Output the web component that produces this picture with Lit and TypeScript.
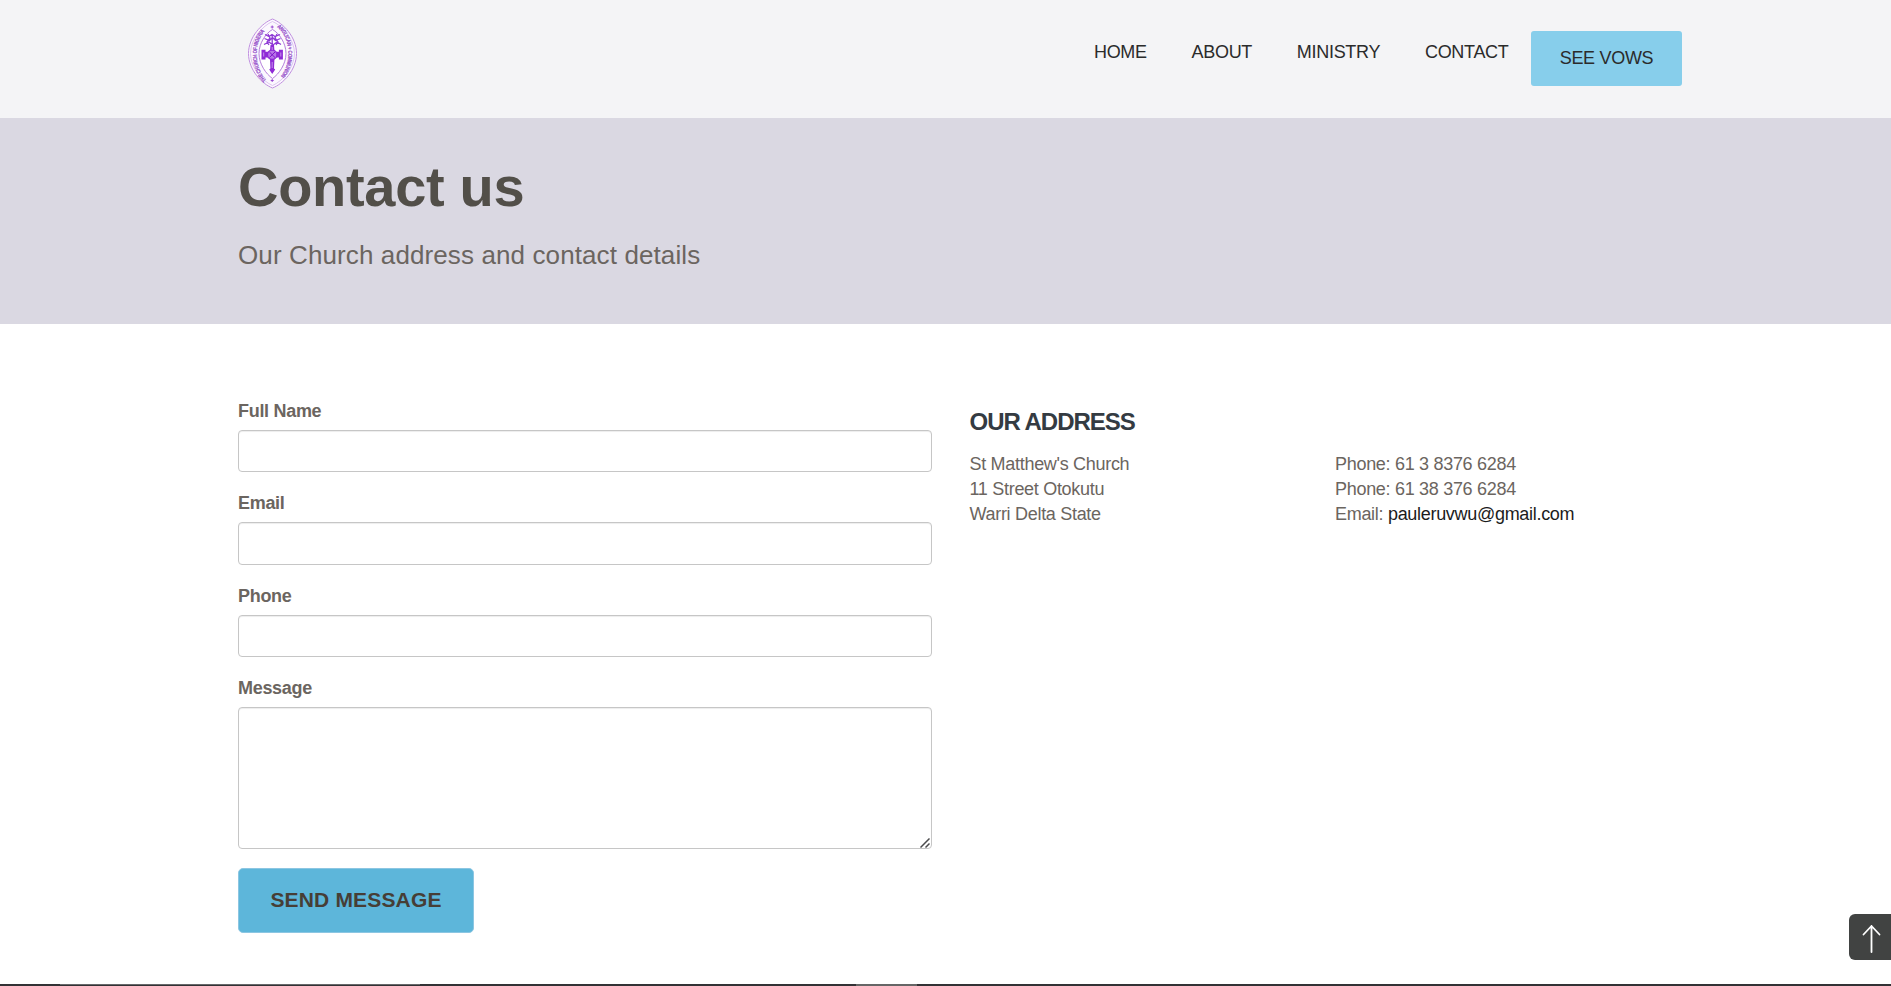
import { LitElement, html, css } from "lit";
import { customElement } from "lit/decorators.js";

@customElement("church-crest")
class ChurchCrest extends LitElement {
  static styles = css`
    :host { display: block; width: 51px; height: 71px; }
    svg { display: block; }
    text { font-family: "Liberation Sans", Arial, sans-serif; font-size: 5.6px; font-weight: 700; fill: #9a55cc; stroke: #9a55cc; stroke-width: .25px; }
  `;
  render() {
    return html`<svg width="51" height="71" viewBox="0 0 51 71" fill="none">
      <path d="M25.500 1C36 5 49.500 19 49.500 35.500S36 66 25.500 70C15 66 1.500 52 1.500 35.500S15 5 25.500 1Z" fill="#fbf8fe" stroke="#c08fe0" stroke-width="1"/>
      <path d="M25.500 3.500C35 7.500 47.500 21 47.500 35.500S35 63.500 25.500 67.500C16 63.500 3.500 50 3.500 35.500S16 7.500 25.500 3.500Z" stroke="#d6b8eb" stroke-width=".8"/>
      <path d="M25.500 11.500C32 15 39 25 39 35.500S32 56 25.500 60.500C19 56 12 46 12 35.500S19 15 25.500 11.500Z" fill="#fff" stroke="#b57fdb" stroke-width="1"/>
      <path id="left" d="M19.500 62C13 56 9.800 46 9.800 35.500S13 16.500 21 10.500"/>
      <path id="right" d="M30 9C38 15.500 41.300 25 41.300 35.500S38 55 30 62"/>
      <text textLength="53" lengthAdjust="spacingAndGlyphs"><textPath href="#left">THE CHURCH OF NIGERIA</textPath></text>
      <text textLength="54" lengthAdjust="spacingAndGlyphs"><textPath href="#right">ANGLICAN + COMMUNION</textPath></text>
      <path d="M23.700 9h3M25.200 7.500v3M23.700 62.500h3M25.200 61v3" stroke="#9a4ad2"/>
      <path d="M18 16.500l4 2 3-2 3 2 5-2M17.500 20.500l5 2 3-3 3 3 5-2M17 26.500l5-2.500 4 3 4-3 4 2.500M21 16l2 4-3 4 2 3M30 16l-2 4 3 4-2 3M25.200 17v9" stroke="#8f3ad6" stroke-width="1.300"/>
      <path d="M23.500 27l-.6 6.800h-4.400v-2h-4v9.600h4v-2h4.400l.5 11-1.200 1 3 4.600 3-4.600-1.200-1 .5-11h4.400v2h4v-9.600h-4v2h-4.400L27 27Z" fill="#8f2bd6"/>
      <circle cx="25.200" cy="36.700" r="4.700" stroke="#8f2bd6" stroke-width="1.300" fill="#b873e8"/>
      <path d="M22.400 34l5.600 5.500M28 34l-5.600 5.500" stroke="#7d12cb"/>
      <path d="M16.700 34.500v4M33.800 34.500v4M25.200 44v6M25.200 29v3" stroke="#d3a9f0" stroke-width=".8"/>
    </svg>`;
  }
}

@customElement("app-root")
class AppRoot extends LitElement {
  static styles = css`
    :host {
      display: flex; flex-direction: column; height: 986px; overflow: hidden; background: #fff;
      color: #6b6560; font: 18px/25px "Liberation Sans", Arial, sans-serif; letter-spacing: -0.3px;
    }
    * { box-sizing: border-box; }
    a { color: inherit; text-decoration: none; }
    header { flex: none; height: 118px; padding: 18px 209px 0 247px; background: #f4f4f6; display: flex; justify-content: space-between; align-items: flex-start; }
    nav { display: flex; align-items: flex-start; padding-top: 13px; color: #2b2b2b; }
    nav a { margin-right: 44.800px; padding-top: 9px; }
    nav a:nth-last-child(2) { margin-right: 22.500px; }
    nav .vows { margin: 0; width: 151px; height: 55px; padding: 15px 0 0; text-align: center; background: #87ceeb; border-radius: 3px; }
    .hero { flex: none; height: 206px; padding: 38px 238px 0; background: #dad8e2; }
    h1 { margin: 0; font-size: 56px; line-height: 62px; color: #524f49; }
    .hero p { margin: 22px 0 0; font-size: 26px; line-height: 30px; letter-spacing: 0.11px; }
    main { flex: 1; padding: 75px 238px 0; display: flex; gap: 37.500px; }
    form { width: 694px; }
    label { display: block; font-weight: 700; height: 31px; }
    input, textarea { display: block; width: 100%; height: 42.330px; margin: 0 0 19px; border: 1px solid #c6c6c6; border-radius: 4px; background: #fff; box-shadow: inset 0 1px 1px rgba(0,0,0,.075); }
    textarea { height: 142px; resize: none; }
    .message { position: relative; }
    .grip { position: absolute; right: 2px; bottom: 1px; display: block; }
    button { display: block; width: 236px; height: 65px; border: 1px solid #8cc6e2; border-radius: 5px; background: #5db6da; color: #463e36; font: 700 21px "Liberation Sans", Arial, sans-serif; letter-spacing: 0.17px; padding: 0; }
    section { flex: 1; padding-top: 9px; }
    h2 { margin: 0 0 16px; font-size: 24px; line-height: 28px; color: #343b42; letter-spacing: -1.02px; }
    .cols { display: grid; grid-template-columns: 365.500px 1fr; }
    .cols a { color: #1c1c1c; }
    footer { flex: none; height: 2px; background: #333235; display: flex; padding-left: 60px; gap: 436px; }
    .rule { width: 360px; height: 1px; background: #68686a; }
    .block { width: 61px; height: 2px; background: #666; }
    .top { position: absolute; left: 1849px; top: 914px; width: 42px; height: 46px; border-radius: 6px 0 0 6px; background: #414342; }
    .top svg { display: block; }
  `;
  render() {
    return html`
      <header>
        <church-crest></church-crest>
        <nav>
          <a href="#">HOME</a><a href="#">ABOUT</a><a href="#">MINISTRY</a><a href="#">CONTACT</a><a class="vows" href="#">SEE VOWS</a>
        </nav>
      </header>
      <div class="hero"><h1>Contact us</h1><p>Our Church address and contact details</p></div>
      <main>
        <form>
          <label for="name">Full Name</label><input id="name">
          <label for="email">Email</label><input id="email">
          <label for="phone">Phone</label><input id="phone">
          <label for="message">Message</label>
          <div class="message">
            <textarea id="message"></textarea>
            <svg class="grip" width="10" height="10" viewBox="0 0 10 10" stroke="#4b4b4d" stroke-width="1.500"><path d="M.5 9.500l9-9M5.500 9.500l4-4"/></svg>
          </div>
          <button type="button">SEND MESSAGE</button>
        </form>
        <section>
          <h2>OUR ADDRESS</h2>
          <div class="cols">
            <div>St Matthew's Church<br>11 Street Otokutu<br>Warri Delta State</div>
            <div>Phone: 61 3 8376 6284<br>Phone: 61 38 376 6284<br>Email: <a href="#">pauleruvwu@gmail.com</a></div>
          </div>
        </section>
      </main>
      <footer><div class="rule"></div><div class="block"></div></footer>
      <a class="top" href="#" aria-label="Back to top"><svg width="42" height="46" viewBox="0 0 42 46" fill="none" stroke="#fff" stroke-width="1.800" stroke-linecap="round" stroke-linejoin="round"><path d="M22.500 38V12M14.500 20.500l8-8.500 8 8.500"/></svg></a>
    `;
  }
}
